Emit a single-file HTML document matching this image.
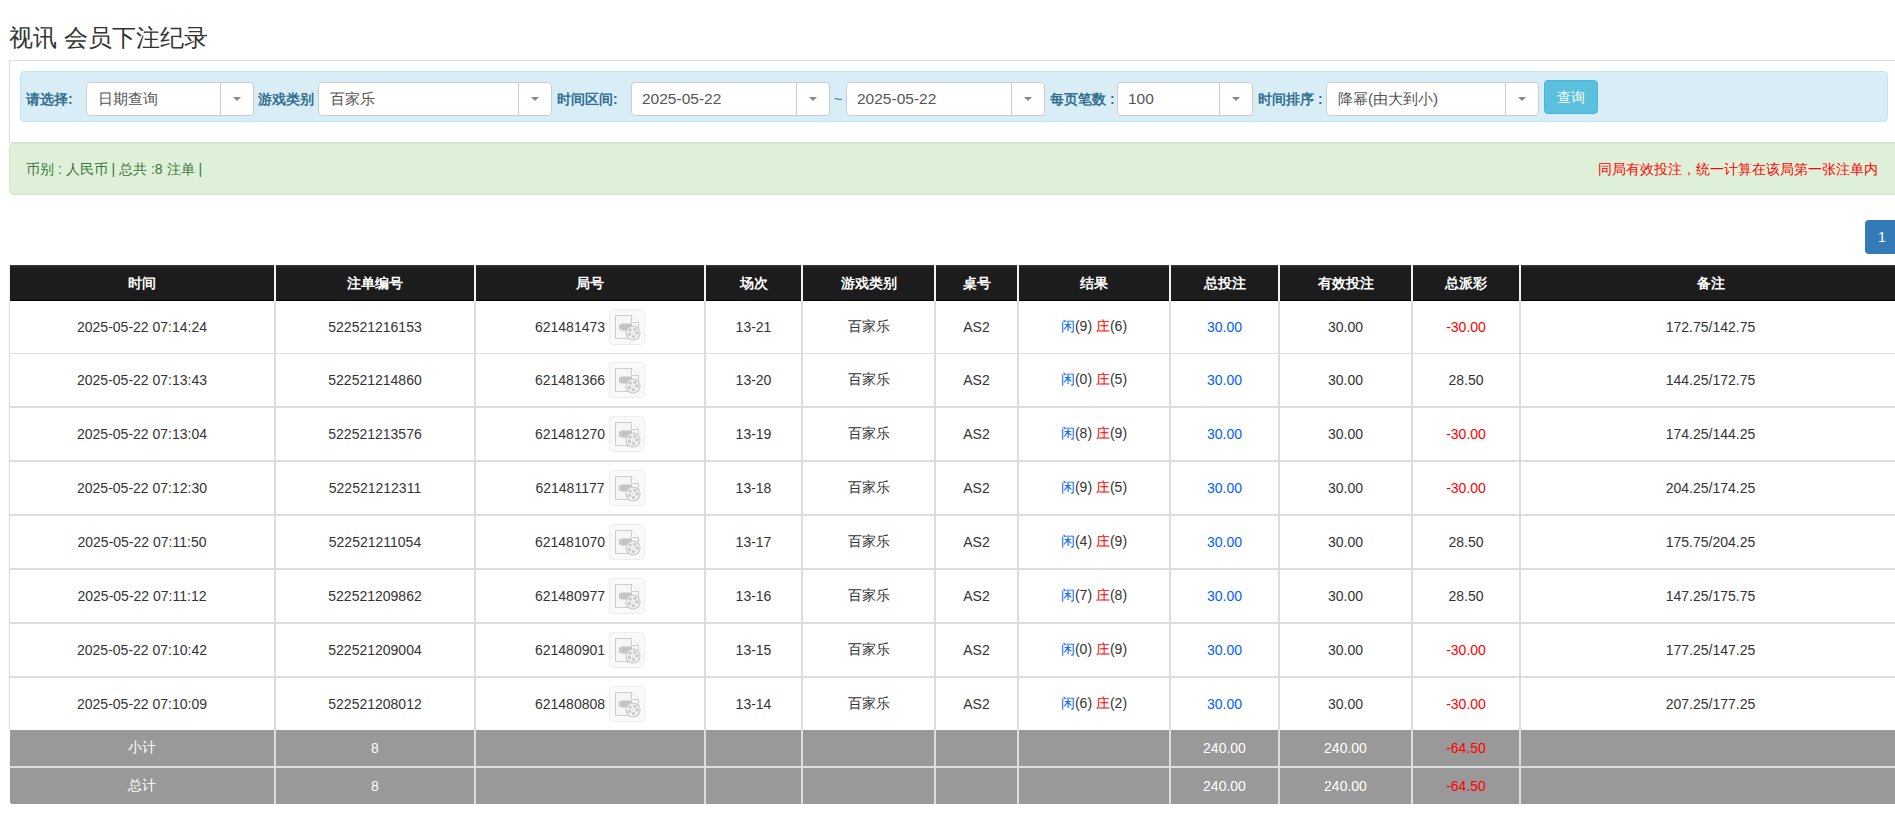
<!DOCTYPE html>
<html><head><meta charset="utf-8">
<style>
html,body{margin:0;padding:0;background:#fff;overflow:hidden;}
body{width:1895px;height:829px;position:relative;font-family:"Liberation Sans",sans-serif;color:#333;font-size:14px;}
.abs{position:absolute;}
#title{left:9px;top:21px;font-size:24px;line-height:34px;color:#333;white-space:nowrap;}
#panel{left:9px;top:60px;width:1900px;height:83px;border:1px solid #ddd;border-right:none;box-sizing:border-box;}
#info{left:20px;top:71px;width:1868px;height:51px;background:#d9edf7;border:1px solid #bce8f1;border-radius:4px;box-sizing:border-box;}
.lbl{position:absolute;top:89px;font-size:14px;line-height:20px;font-weight:bold;color:#31708f;white-space:nowrap;}
.sel{position:absolute;top:82px;height:34px;background:#fff;border:1px solid #ccc;border-radius:4px;box-sizing:border-box;}
.sel .t{position:absolute;left:10px;top:7px;font-size:15.5px;line-height:18px;color:#555;white-space:nowrap;}
.sel .d{position:absolute;top:0;bottom:0;right:0;border-left:1px solid #ccc;}
.sel .c{position:absolute;left:50%;top:50%;margin-left:-4px;margin-top:-2px;width:0;height:0;border-left:4px solid transparent;border-right:4px solid transparent;border-top:4px solid #888;}
#btn{left:1544px;top:80px;width:54px;height:34px;background:#5bc0de;border:1px solid #46b8da;border-radius:4px;box-sizing:border-box;color:#fff;font-size:14px;line-height:32px;text-align:center;}
#alert{left:9px;top:143px;width:1900px;height:52px;background:#dff0d8;border:1px solid #d6e9c6;border-radius:4px;box-sizing:border-box;}
#alert .l{position:absolute;left:16px;top:16px;font-size:14px;line-height:18px;color:#3c763d;white-space:nowrap;}
#alert .r{position:absolute;right:30px;top:16px;font-size:14px;line-height:18px;color:#f00;white-space:nowrap;}
#page{left:1865px;top:220px;width:34px;height:34px;background:#337ab7;border-radius:4px 0 0 4px;color:#fff;font-size:14px;font-weight:normal;line-height:34px;text-align:center;}
table{position:absolute;left:9px;top:265px;border-collapse:separate;border-spacing:0;table-layout:fixed;width:1892px;}
th,td{padding:0;text-align:center;box-sizing:border-box;white-space:nowrap;}
th{height:36px;background:linear-gradient(#3a3a3a 0,#1c1c1c 3px,#1c1c1c 35px,#050505 35px);color:#fff;font-size:14px;font-weight:bold;padding-top:2px;border-left:1px solid #f2f2f2;border-right:1px solid #f2f2f2;}
td{border-left:1px solid #ddd;border-right:1px solid #ddd;border-bottom:2px solid #ddd;height:54px;font-size:14px;color:#333;}
tr.r1 td{border-bottom:1px solid #ddd;height:53px;}
tr.r8 td{border-bottom:none;height:52px;}
tr.sum td{background:#999;color:#fff;height:38px;border-bottom:2px solid #ddd;}
tr.sum2 td{height:36px;border-bottom:none;}
tr.sum td:first-child{border-left-color:#fff;}
tr.sum2 td:first-child{border-bottom-left-radius:3px;}
.b{color:#0060ff;}
.rd,tr.sum td.rd{color:#f00;}
.vid{display:inline-block;vertical-align:middle;width:36px;height:36px;margin-left:4px;border:1px solid #eee;border-radius:4px;background:#f9f9f9;box-sizing:border-box;position:relative;}
.vid svg{position:absolute;left:0;top:0;}
</style></head>
<body>
<div id="title" class="abs">视讯 会员下注纪录</div>
<div id="panel" class="abs"></div>
<div id="info" class="abs"></div>
<div class="lbl" style="left:26px">请选择:</div>
<div class="sel" style="left:86px;width:168px"><div class="t" style="font-size:15px;left:11px">日期查询</div><div class="d" style="width:32px"><div class="c"></div></div></div>
<div class="lbl" style="left:258px">游戏类别</div>
<div class="sel" style="left:318px;width:234px"><div class="t" style="font-size:15px;left:11px">百家乐</div><div class="d" style="width:32px"><div class="c"></div></div></div>
<div class="lbl" style="left:557px">时间区间:</div>
<div class="sel" style="left:631px;width:199px"><div class="t">2025-05-22</div><div class="d" style="width:32px"><div class="c"></div></div></div>
<div class="lbl" style="left:834px;font-weight:normal">~</div>
<div class="sel" style="left:846px;width:199px"><div class="t">2025-05-22</div><div class="d" style="width:32px"><div class="c"></div></div></div>
<div class="lbl" style="left:1050px">每页笔数 :</div>
<div class="sel" style="left:1117px;width:136px"><div class="t">100</div><div class="d" style="width:32px"><div class="c"></div></div></div>
<div class="lbl" style="left:1258px">时间排序 :</div>
<div class="sel" style="left:1326px;width:213px"><div class="t" style="font-size:15.3px;left:11px">降幂(由大到小)</div><div class="d" style="width:32px"><div class="c"></div></div></div>
<div id="btn" class="abs">查询</div>
<div id="alert" class="abs"><div class="l">币别 : 人民币 | 总共 :8 注单 |</div><div class="r">同局有效投注，统一计算在该局第一张注单内</div></div>
<div id="page" class="abs">1</div>
<table>
<colgroup><col style="width:266px"><col style="width:200px"><col style="width:230px"><col style="width:97px"><col style="width:133px"><col style="width:83px"><col style="width:152px"><col style="width:109px"><col style="width:133px"><col style="width:108px"><col></colgroup>
<thead><tr><th>时间</th><th>注单编号</th><th>局号</th><th>场次</th><th>游戏类别</th><th>桌号</th><th>结果</th><th>总投注</th><th>有效投注</th><th>总派彩</th><th>备注</th></tr></thead>
<tbody>
<tr class="r1"><td>2025-05-22 07:14:24</td><td>522521216153</td><td><span style="position:relative;top:1px">621481473</span><span class="vid"><svg width="34" height="34" viewBox="0 0 34 34"><path d="M5.5 5.5h16l7 7v16h-23z" fill="#f6f6f6" stroke="#cdcdcd" stroke-width="1"/><path d="M21.5 5.5v7h7" fill="#fff" stroke="#cdcdcd" stroke-width="1"/><path d="M9 13.5l2 2v-2h11v7H11v-2l-2 2z" fill="#c4c4c4"/><circle cx="23" cy="23" r="7" fill="#f1f1f1" stroke="#c8c8c8" stroke-width="1.1"/><circle cx="20.1" cy="20.1" r="1.7" fill="#c8c8c8"/><circle cx="24.8" cy="19.4" r="1.7" fill="#c8c8c8"/><circle cx="27" cy="23" r="1.7" fill="#c8c8c8"/><circle cx="23.4" cy="26.6" r="1.7" fill="#c8c8c8"/><circle cx="19.4" cy="24.4" r="1.7" fill="#c8c8c8"/><circle cx="23" cy="23" r="0.6" fill="#c8c8c8"/></svg></span></td><td>13-21</td><td>百家乐</td><td>AS2</td><td><span class="b">闲</span>(9) <span class="rd">庄</span>(6)</td><td class="b">30.00</td><td>30.00</td><td><span class="rd">-30.00</span></td><td>172.75/142.75</td></tr>
<tr><td>2025-05-22 07:13:43</td><td>522521214860</td><td><span style="position:relative;top:1px">621481366</span><span class="vid"><svg width="34" height="34" viewBox="0 0 34 34"><path d="M5.5 5.5h16l7 7v16h-23z" fill="#f6f6f6" stroke="#cdcdcd" stroke-width="1"/><path d="M21.5 5.5v7h7" fill="#fff" stroke="#cdcdcd" stroke-width="1"/><path d="M9 13.5l2 2v-2h11v7H11v-2l-2 2z" fill="#c4c4c4"/><circle cx="23" cy="23" r="7" fill="#f1f1f1" stroke="#c8c8c8" stroke-width="1.1"/><circle cx="20.1" cy="20.1" r="1.7" fill="#c8c8c8"/><circle cx="24.8" cy="19.4" r="1.7" fill="#c8c8c8"/><circle cx="27" cy="23" r="1.7" fill="#c8c8c8"/><circle cx="23.4" cy="26.6" r="1.7" fill="#c8c8c8"/><circle cx="19.4" cy="24.4" r="1.7" fill="#c8c8c8"/><circle cx="23" cy="23" r="0.6" fill="#c8c8c8"/></svg></span></td><td>13-20</td><td>百家乐</td><td>AS2</td><td><span class="b">闲</span>(0) <span class="rd">庄</span>(5)</td><td class="b">30.00</td><td>30.00</td><td>28.50</td><td>144.25/172.75</td></tr>
<tr><td>2025-05-22 07:13:04</td><td>522521213576</td><td><span style="position:relative;top:1px">621481270</span><span class="vid"><svg width="34" height="34" viewBox="0 0 34 34"><path d="M5.5 5.5h16l7 7v16h-23z" fill="#f6f6f6" stroke="#cdcdcd" stroke-width="1"/><path d="M21.5 5.5v7h7" fill="#fff" stroke="#cdcdcd" stroke-width="1"/><path d="M9 13.5l2 2v-2h11v7H11v-2l-2 2z" fill="#c4c4c4"/><circle cx="23" cy="23" r="7" fill="#f1f1f1" stroke="#c8c8c8" stroke-width="1.1"/><circle cx="20.1" cy="20.1" r="1.7" fill="#c8c8c8"/><circle cx="24.8" cy="19.4" r="1.7" fill="#c8c8c8"/><circle cx="27" cy="23" r="1.7" fill="#c8c8c8"/><circle cx="23.4" cy="26.6" r="1.7" fill="#c8c8c8"/><circle cx="19.4" cy="24.4" r="1.7" fill="#c8c8c8"/><circle cx="23" cy="23" r="0.6" fill="#c8c8c8"/></svg></span></td><td>13-19</td><td>百家乐</td><td>AS2</td><td><span class="b">闲</span>(8) <span class="rd">庄</span>(9)</td><td class="b">30.00</td><td>30.00</td><td><span class="rd">-30.00</span></td><td>174.25/144.25</td></tr>
<tr><td>2025-05-22 07:12:30</td><td>522521212311</td><td><span style="position:relative;top:1px">621481177</span><span class="vid"><svg width="34" height="34" viewBox="0 0 34 34"><path d="M5.5 5.5h16l7 7v16h-23z" fill="#f6f6f6" stroke="#cdcdcd" stroke-width="1"/><path d="M21.5 5.5v7h7" fill="#fff" stroke="#cdcdcd" stroke-width="1"/><path d="M9 13.5l2 2v-2h11v7H11v-2l-2 2z" fill="#c4c4c4"/><circle cx="23" cy="23" r="7" fill="#f1f1f1" stroke="#c8c8c8" stroke-width="1.1"/><circle cx="20.1" cy="20.1" r="1.7" fill="#c8c8c8"/><circle cx="24.8" cy="19.4" r="1.7" fill="#c8c8c8"/><circle cx="27" cy="23" r="1.7" fill="#c8c8c8"/><circle cx="23.4" cy="26.6" r="1.7" fill="#c8c8c8"/><circle cx="19.4" cy="24.4" r="1.7" fill="#c8c8c8"/><circle cx="23" cy="23" r="0.6" fill="#c8c8c8"/></svg></span></td><td>13-18</td><td>百家乐</td><td>AS2</td><td><span class="b">闲</span>(9) <span class="rd">庄</span>(5)</td><td class="b">30.00</td><td>30.00</td><td><span class="rd">-30.00</span></td><td>204.25/174.25</td></tr>
<tr><td>2025-05-22 07:11:50</td><td>522521211054</td><td><span style="position:relative;top:1px">621481070</span><span class="vid"><svg width="34" height="34" viewBox="0 0 34 34"><path d="M5.5 5.5h16l7 7v16h-23z" fill="#f6f6f6" stroke="#cdcdcd" stroke-width="1"/><path d="M21.5 5.5v7h7" fill="#fff" stroke="#cdcdcd" stroke-width="1"/><path d="M9 13.5l2 2v-2h11v7H11v-2l-2 2z" fill="#c4c4c4"/><circle cx="23" cy="23" r="7" fill="#f1f1f1" stroke="#c8c8c8" stroke-width="1.1"/><circle cx="20.1" cy="20.1" r="1.7" fill="#c8c8c8"/><circle cx="24.8" cy="19.4" r="1.7" fill="#c8c8c8"/><circle cx="27" cy="23" r="1.7" fill="#c8c8c8"/><circle cx="23.4" cy="26.6" r="1.7" fill="#c8c8c8"/><circle cx="19.4" cy="24.4" r="1.7" fill="#c8c8c8"/><circle cx="23" cy="23" r="0.6" fill="#c8c8c8"/></svg></span></td><td>13-17</td><td>百家乐</td><td>AS2</td><td><span class="b">闲</span>(4) <span class="rd">庄</span>(9)</td><td class="b">30.00</td><td>30.00</td><td>28.50</td><td>175.75/204.25</td></tr>
<tr><td>2025-05-22 07:11:12</td><td>522521209862</td><td><span style="position:relative;top:1px">621480977</span><span class="vid"><svg width="34" height="34" viewBox="0 0 34 34"><path d="M5.5 5.5h16l7 7v16h-23z" fill="#f6f6f6" stroke="#cdcdcd" stroke-width="1"/><path d="M21.5 5.5v7h7" fill="#fff" stroke="#cdcdcd" stroke-width="1"/><path d="M9 13.5l2 2v-2h11v7H11v-2l-2 2z" fill="#c4c4c4"/><circle cx="23" cy="23" r="7" fill="#f1f1f1" stroke="#c8c8c8" stroke-width="1.1"/><circle cx="20.1" cy="20.1" r="1.7" fill="#c8c8c8"/><circle cx="24.8" cy="19.4" r="1.7" fill="#c8c8c8"/><circle cx="27" cy="23" r="1.7" fill="#c8c8c8"/><circle cx="23.4" cy="26.6" r="1.7" fill="#c8c8c8"/><circle cx="19.4" cy="24.4" r="1.7" fill="#c8c8c8"/><circle cx="23" cy="23" r="0.6" fill="#c8c8c8"/></svg></span></td><td>13-16</td><td>百家乐</td><td>AS2</td><td><span class="b">闲</span>(7) <span class="rd">庄</span>(8)</td><td class="b">30.00</td><td>30.00</td><td>28.50</td><td>147.25/175.75</td></tr>
<tr><td>2025-05-22 07:10:42</td><td>522521209004</td><td><span style="position:relative;top:1px">621480901</span><span class="vid"><svg width="34" height="34" viewBox="0 0 34 34"><path d="M5.5 5.5h16l7 7v16h-23z" fill="#f6f6f6" stroke="#cdcdcd" stroke-width="1"/><path d="M21.5 5.5v7h7" fill="#fff" stroke="#cdcdcd" stroke-width="1"/><path d="M9 13.5l2 2v-2h11v7H11v-2l-2 2z" fill="#c4c4c4"/><circle cx="23" cy="23" r="7" fill="#f1f1f1" stroke="#c8c8c8" stroke-width="1.1"/><circle cx="20.1" cy="20.1" r="1.7" fill="#c8c8c8"/><circle cx="24.8" cy="19.4" r="1.7" fill="#c8c8c8"/><circle cx="27" cy="23" r="1.7" fill="#c8c8c8"/><circle cx="23.4" cy="26.6" r="1.7" fill="#c8c8c8"/><circle cx="19.4" cy="24.4" r="1.7" fill="#c8c8c8"/><circle cx="23" cy="23" r="0.6" fill="#c8c8c8"/></svg></span></td><td>13-15</td><td>百家乐</td><td>AS2</td><td><span class="b">闲</span>(0) <span class="rd">庄</span>(9)</td><td class="b">30.00</td><td>30.00</td><td><span class="rd">-30.00</span></td><td>177.25/147.25</td></tr>
<tr class="r8"><td>2025-05-22 07:10:09</td><td>522521208012</td><td><span style="position:relative;top:1px">621480808</span><span class="vid"><svg width="34" height="34" viewBox="0 0 34 34"><path d="M5.5 5.5h16l7 7v16h-23z" fill="#f6f6f6" stroke="#cdcdcd" stroke-width="1"/><path d="M21.5 5.5v7h7" fill="#fff" stroke="#cdcdcd" stroke-width="1"/><path d="M9 13.5l2 2v-2h11v7H11v-2l-2 2z" fill="#c4c4c4"/><circle cx="23" cy="23" r="7" fill="#f1f1f1" stroke="#c8c8c8" stroke-width="1.1"/><circle cx="20.1" cy="20.1" r="1.7" fill="#c8c8c8"/><circle cx="24.8" cy="19.4" r="1.7" fill="#c8c8c8"/><circle cx="27" cy="23" r="1.7" fill="#c8c8c8"/><circle cx="23.4" cy="26.6" r="1.7" fill="#c8c8c8"/><circle cx="19.4" cy="24.4" r="1.7" fill="#c8c8c8"/><circle cx="23" cy="23" r="0.6" fill="#c8c8c8"/></svg></span></td><td>13-14</td><td>百家乐</td><td>AS2</td><td><span class="b">闲</span>(6) <span class="rd">庄</span>(2)</td><td class="b">30.00</td><td>30.00</td><td><span class="rd">-30.00</span></td><td>207.25/177.25</td></tr>
<tr class="sum"><td>小计</td><td>8</td><td></td><td></td><td></td><td></td><td></td><td>240.00</td><td>240.00</td><td class="rd">-64.50</td><td></td></tr>
<tr class="sum sum2"><td>总计</td><td>8</td><td></td><td></td><td></td><td></td><td></td><td>240.00</td><td>240.00</td><td class="rd">-64.50</td><td></td></tr>
</tbody>
</table>
</body></html>
